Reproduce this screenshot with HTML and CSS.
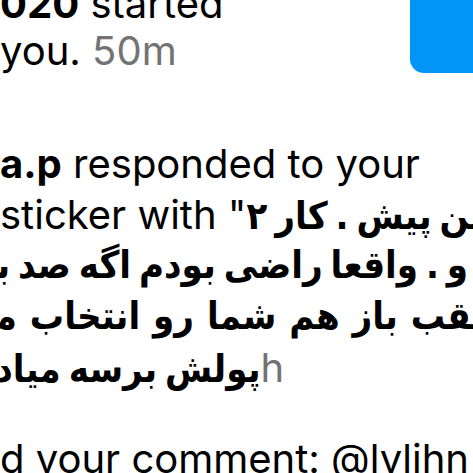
FILE: index.html
```html
<!DOCTYPE html>
<html lang="en">
<head>
    <meta charset="UTF-8">
    <meta name="viewport" content="width=device-width, initial-scale=1.0">
    <title>Activity</title>
    <link rel="stylesheet" href="styles.css">
</head>
<body>

    <div class="feed">
        <!-- follow notification -->
        <div class="notif notif-follow">
            <div class="notif-text">
                <div class="line"><b>020</b> started</div>
                <div class="line">you. <span class="time">50m</span></div>
            </div>
            <button class="follow-btn" type="button"></button>
        </div>

        <!-- story sticker reply -->
        <div class="notif">
            <div class="notif-text">
                <div class="line"><b>a.p</b> responded to your</div>
                <div class="line">sticker with "<span class="fa">من پیش . کار ۲</span></div>
                <div class="line line-rtl fa" dir="rtl">ما و . واقعا راضی بودم اگه صد بار</div>
                <div class="line line-rtl line-cut fa" dir="rtl">عقب باز هم شما رو انتخاب میکردم</div>
                <div class="line line-tail"><span class="fa">پولش برسه میاد</span>" <span class="time">2h</span></div>
            </div>
        </div>

        <!-- comment like -->
        <div class="notif">
            <div class="notif-text">
                <div class="line">d your comment: @lylihn</div>
            </div>
        </div>
    </div>

</body>
</html>
```
FILE: styles.css
```css
html, body {
    margin: 0;
    padding: 0;
}

body {
    background-color: #fff;
    color: #000;
    font-family: 'Inter', 'DejaVu Sans', sans-serif;
    font-size: 40px;
    overflow: hidden;
}

.feed {
    margin-top: -40px;
}

.notif {
    display: flex;
    align-items: center;
    padding: 20px 0;
}

.notif-follow {
    padding-bottom: 44px;
}

.notif-text {
    flex: 1;
    min-width: 0;
}

.line {
    white-space: nowrap;
    height: 51px;
    line-height: 51px;
}

.notif-follow .line {
    height: 47px;
    line-height: 47px;
}

.line b {
    font-weight: 700;
}

.time {
    color: #737373;
}

.fa {
    font-family: 'DejaVu Sans Condensed', 'DejaVu Sans', sans-serif;
    font-size: 38px;
    font-weight: 700;
    word-spacing: -4px;
}

.line-rtl {
    direction: rtl;
    margin-right: -37px;
}

.line-cut {
    margin-right: -22px;
    word-spacing: 1px;
}

.line-tail {
    margin-left: -59px;
}

.follow-btn {
    flex: none;
    width: 80px;
    height: 92px;
    margin-right: -17px;
    border: none;
    border-radius: 14px;
    background-color: #0095f6;
}
```
